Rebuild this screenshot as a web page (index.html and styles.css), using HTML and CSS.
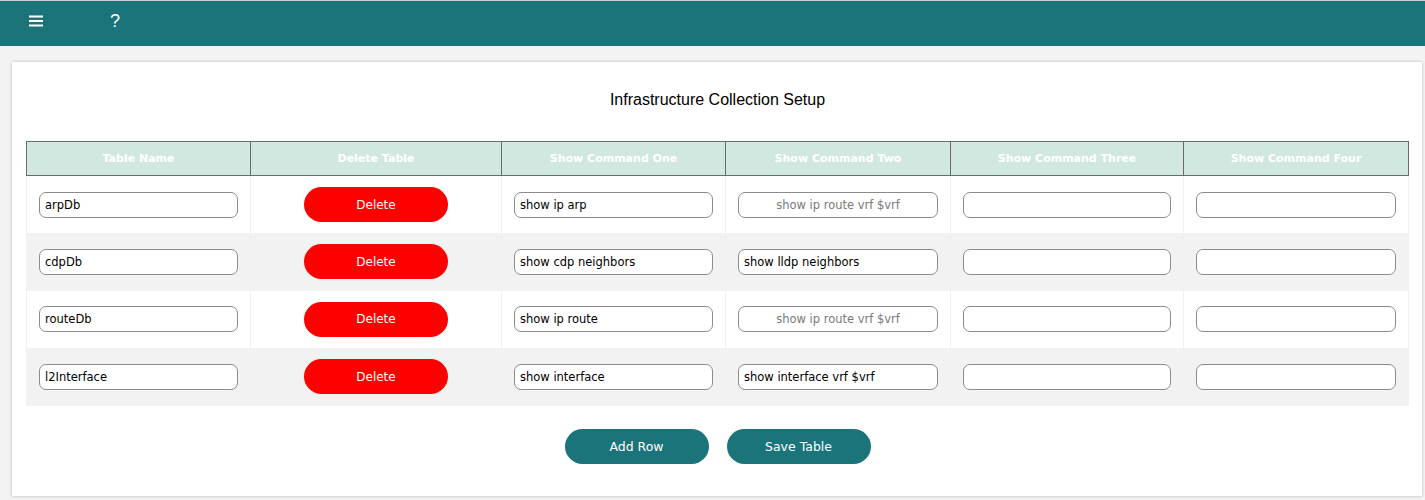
FILE: index.html
```html
<!DOCTYPE html>
<html>
<head>
<meta charset="utf-8">
<link rel="stylesheet" href="styles.css">
</head>
<body>
<header class="topbar">
  <button class="icon-btn menu" aria-label="menu">
    <svg width="14" height="12" viewBox="0 0 14 12"><rect x="0" y="0.5" width="14" height="2" fill="#fff"/><rect x="0" y="5" width="14" height="2" fill="#fff"/><rect x="0" y="9.5" width="14" height="2" fill="#fff"/></svg>
  </button>
  <button class="icon-btn help" aria-label="help">?</button>
</header>
<main class="page">
  <section class="card">
    <h1 class="title">Infrastructure Collection Setup</h1>
    <table class="grid">
      <thead>
        <tr>
          <th class="c-name">Table Name</th>
          <th class="c-del">Delete Table</th>
          <th class="c-one">Show Command One</th>
          <th class="c-two">Show Command Two</th>
          <th class="c-three">Show Command Three</th>
          <th class="c-four">Show Command Four</th>
        </tr>
      </thead>
      <tbody>
        <tr>
          <td><input class="field" value="arpDb"></td>
          <td class="center"><button class="btn-del">Delete</button></td>
          <td><input class="field" value="show ip arp"></td>
          <td><input class="field" placeholder="show ip route vrf $vrf"></td>
          <td><input class="field"></td>
          <td><input class="field"></td>
        </tr>
        <tr>
          <td><input class="field" value="cdpDb"></td>
          <td class="center"><button class="btn-del">Delete</button></td>
          <td><input class="field" value="show cdp neighbors"></td>
          <td><input class="field" value="show lldp neighbors"></td>
          <td><input class="field"></td>
          <td><input class="field"></td>
        </tr>
        <tr>
          <td><input class="field" value="routeDb"></td>
          <td class="center"><button class="btn-del">Delete</button></td>
          <td><input class="field" value="show ip route"></td>
          <td><input class="field" placeholder="show ip route vrf $vrf"></td>
          <td><input class="field"></td>
          <td><input class="field"></td>
        </tr>
        <tr>
          <td><input class="field" value="l2Interface"></td>
          <td class="center"><button class="btn-del">Delete</button></td>
          <td><input class="field" value="show interface"></td>
          <td><input class="field" value="show interface vrf $vrf"></td>
          <td><input class="field"></td>
          <td><input class="field"></td>
        </tr>
      </tbody>
    </table>
    <div class="actions">
      <button class="btn-teal">Add Row</button>
      <button class="btn-teal">Save Table</button>
    </div>
  </section>
</main>
</body>
</html>
```

FILE: styles.css
```css
* { box-sizing: border-box; }
html, body { margin: 0; padding: 0; }
body {
  background: #f3f3f3;
  font-family: "DejaVu Sans", Verdana, sans-serif;
  height: 500px;
  overflow: hidden;
}
.topbar {
  height: 46px;
  background: #1b747a;
  border-top: 1px solid #c9d3d4;
  display: flex;
  align-items: center;
  padding-left: 29px;
}
.icon-btn {
  background: none;
  border: none;
  color: #fff;
  padding: 0;
  cursor: pointer;
  display: flex;
  align-items: center;
  justify-content: center;
}
.menu { width: 14px; height: 20px; margin-top: -6px; }
.help {
  margin-left: 66px;
  font-family: "Liberation Sans", Arial, sans-serif;
  font-size: 18px;
  width: 12px;
  margin-top: -5px;
}
.page {
  padding: 16px 3px 0 12px;
}
.card {
  background: #fff;
  box-shadow: 0 0 3px rgba(0,0,0,0.25);
  height: 434px;
  padding: 0 13px 0 14px;
  display: flex;
  flex-direction: column;
}
.title {
  margin: 28px 0 0;
  height: 20px;
  text-align: center;
  font-family: "Liberation Sans", Arial, sans-serif;
  font-weight: normal;
  font-size: 16px;
  line-height: 20px;
  color: #000;
}
.grid {
  margin-top: 31px;
  width: 1382px;
  border-collapse: collapse;
  table-layout: fixed;
}
.grid th {
  background: #d1e8e1;
  color: #fff;
  font-weight: bold;
  font-size: 11px;
  height: 34px;
  border: 1px solid #6a6a6a;
  padding: 0;
}
.c-name { width: 224px; }
.c-del { width: 251px; }
.c-one { width: 224px; }
.c-two { width: 225px; }
.c-three { width: 233px; }
.c-four { width: 225px; }
.grid td {
  height: 57.5px;
  padding: 0 12px;
  border-left: 1px solid #f0f0f0;
  border-right: 1px solid #f0f0f0;
}
.grid tbody tr:nth-child(even) td { background: #f2f2f2; }
.center { text-align: center; }
.field {
  display: block;
  width: 100%;
  height: 26px;
  border: 1px solid #8c8c8c;
  border-radius: 7px;
  padding: 0 5px;
  font-family: "DejaVu Sans", Verdana, sans-serif;
  font-size: 11.5px;
  color: #000;
  background: #fff;
  outline: none;
}
.field::placeholder {
  color: #7a7a7a;
  text-align: center;
}
.btn-del {
  width: 144px;
  height: 35px;
  border: none;
  border-radius: 18px;
  background: #ff0000;
  color: #fff;
  font-family: "DejaVu Sans", Verdana, sans-serif;
  font-size: 12px;
  cursor: pointer;
}
.actions {
  display: flex;
  justify-content: center;
  gap: 18px;
  margin-top: 23px;
}
.btn-teal {
  width: 144px;
  height: 35px;
  border: none;
  border-radius: 18px;
  background: #1b747a;
  color: #fff;
  font-family: "DejaVu Sans", Verdana, sans-serif;
  font-size: 12.5px;
  cursor: pointer;
}
```
